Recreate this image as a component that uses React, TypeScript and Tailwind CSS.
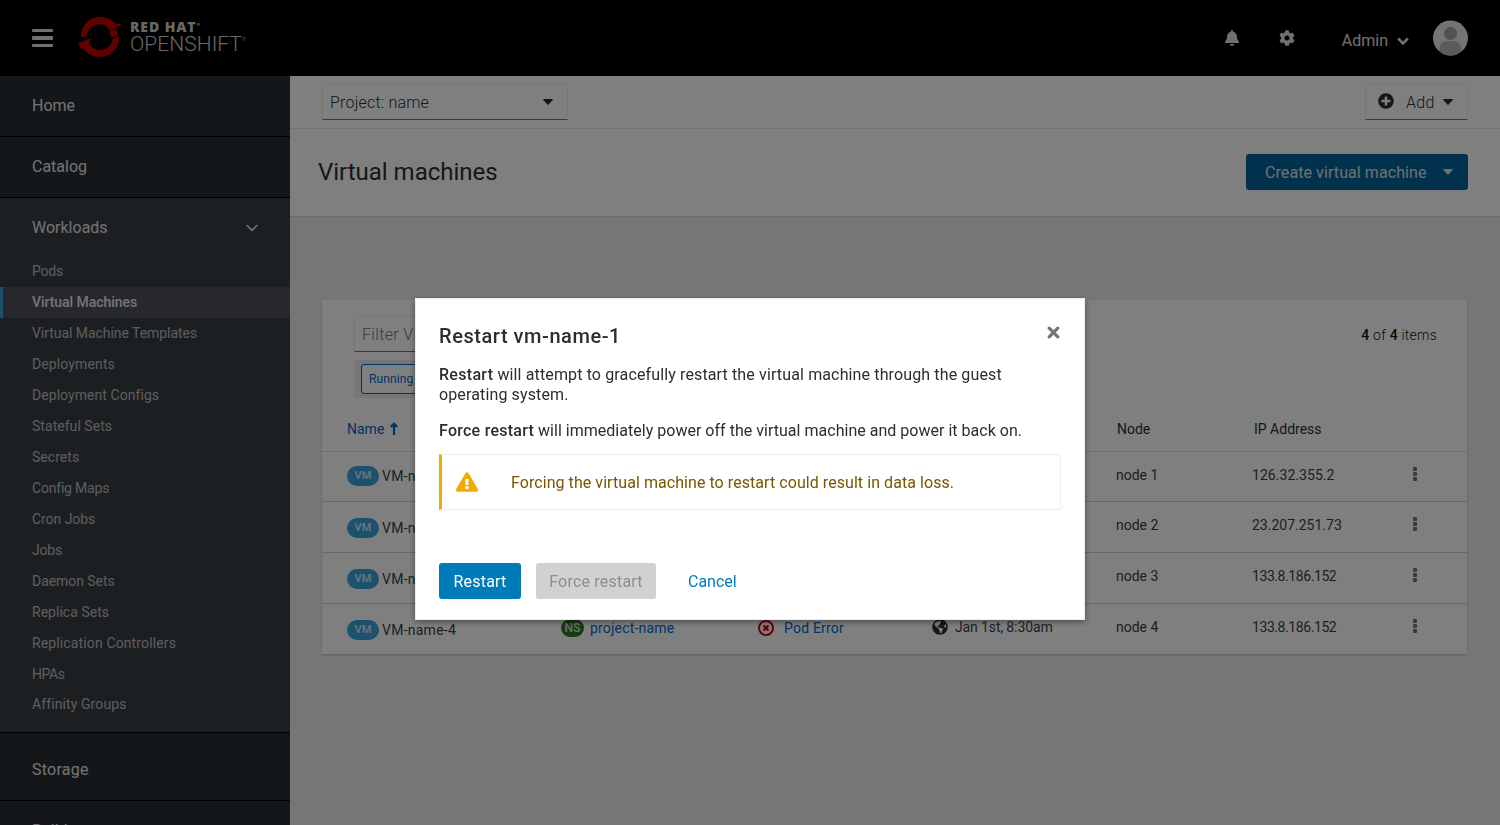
import { FaBell, FaCog, FaExclamationTriangle, FaGlobeAmericas, FaPlusCircle } from "react-icons/fa";

const workloads = [
  { label: "Pods", tracking: "tracking-[-0.2px]" },
  { label: "Virtual Machines", active: true, tracking: "tracking-[-0.05px]" },
  { label: "Virtual Machine Templates", tracking: "tracking-[-0.05px]" },
  { label: "Deployments", tracking: "tracking-[0.12px]" },
  { label: "Deployment Configs", tracking: "tracking-[0.06px]" },
  { label: "Stateful Sets", tracking: "tracking-[0.04px]" },
  { label: "Secrets", tracking: "tracking-[0.04px]" },
  { label: "Config Maps", tracking: "tracking-[-0.2px]" },
  { label: "Cron Jobs", tracking: "tracking-[-0.05px]" },
  { label: "Jobs", tracking: "tracking-[-0.2px]" },
  { label: "Daemon Sets", tracking: "tracking-[-0.06px]" },
  { label: "Replica Sets", tracking: "tracking-[0.03px]" },
  { label: "Replication Controllers", tracking: "tracking-[0.13px]" },
  { label: "HPAs", tracking: "tracking-[-0.4px]" },
  { label: "Affinity Groups", tracking: "tracking-[0.1px]" },
];

const machines = [
  { name: "VM-name-1", node: "node 1", ip: "126.32.355.2", row: "h-[50px]", namePad: "pb-[2px]", cellPad: "pb-[4px]", ipTracking: "tracking-[0.05px]", detail: false },
  { name: "VM-name-2", node: "node 2", ip: "23.207.251.73", row: "h-[51px]", namePad: "pt-[2px]", cellPad: "pb-[4px]", ipTracking: "", detail: false },
  { name: "VM-name-3", node: "node 3", ip: "133.8.186.152", row: "h-[51px]", namePad: "pt-[2px]", cellPad: "pb-[4px]", ipTracking: "tracking-[-0.42px]", detail: false },
  { name: "VM-name-4", node: "node 4", ip: "133.8.186.152", row: "h-[51px]", namePad: "pt-[2px]", cellPad: "pb-[4px]", ipTracking: "tracking-[-0.42px]", detail: true },
];

function Caret({ className }: { className: string }) {
  return (
    <svg viewBox="0 0 10 6" className={`h-[6px] w-[10px] shrink-0 ${className}`} fill="currentColor">
      <path d="M.5 0h9q.8.3.2 1L5.6 5.6q-.6.6-1.2 0L.3 1Q-.2.3.5 0z" />
    </svg>
  );
}

function Logo() {
  return (
    <div className="flex items-start">
      <svg viewBox="0 0 44 42" className="-mt-[2px] h-[42px] w-[44px]" fill="#c40000">
        <path d="M3 21.500C2.500 9.500 11.500 1 22.500 1C29 1 34.500 3.500 38 8.300L43 7.200L43.300 9.400L31.500 14.500C29.500 10.500 26.500 8.200 22.500 8.200C15.500 8.200 9.600 12 9.200 19.700Z" />
        <path d="M31.500 14.800L38.500 12.800L40 19.500L33 22Z" />
        <path d="M.2 27.300L7 24.500L9.300 30.500L2.800 33Z" />
        <path d="M6.500 24.600L13.500 22L11.300 27C13 31.500 17.500 34 22.300 34C29.500 34 34 28.500 34.800 22.500L41 20C41.500 32 33.500 41 22.300 41C14 41 8 37 4.800 31.500Z" />
      </svg>
      <div className="ml-2 flex flex-col pt-[2px] text-[#d1d1d1]">
        <div className="flex h-[14px] items-start font-['Open_Sans',sans-serif] text-[14px] leading-[14px] font-extrabold tracking-[0.9px]">
          <span>RED HAT</span>
          <span className="text-[4px] leading-[9px] tracking-normal">®</span>
        </div>
        <div className="flex h-[21px] items-start text-[21px] leading-[20px] font-light tracking-[0.05px]">
          <span>OPENSHIFT</span>
          <span className="text-[5px] leading-[10px]">®</span>
        </div>
      </div>
    </div>
  );
}

function Header() {
  return (
    <header className="flex h-[76px] shrink-0 items-center bg-black text-[#e0e0e0]">
      <div className="ml-8 flex w-[21px] flex-col gap-[4px]">
        <span className="h-[3px] rounded-[1px] bg-[#e0e0e0]" />
        <span className="h-[4px] rounded-[1px] bg-[#e0e0e0]" />
        <span className="h-[3px] rounded-[1px] bg-[#e0e0e0]" />
      </div>
      <div className="ml-[25px]">
        <Logo />
      </div>
      <div className="ml-auto flex items-center pr-8">
        <FaBell className="size-4" />
        <FaCog className="ml-[39px] size-4" />
        <span className="mt-[5px] ml-[47px] text-base">Admin</span>
        <svg viewBox="0 0 12 9" className="mt-[7px] ml-[9px] h-[9px] w-3" fill="none" stroke="currentColor" strokeWidth="2.600">
          <path d="M1.200 1.500L6 6.300L10.800 1.500" />
        </svg>
        <svg viewBox="0 0 35 36" className="ml-[24px] h-9 w-[35px]">
          <defs>
            <clipPath id="avatar"><circle cx="17.500" cy="18" r="17.500" /></clipPath>
          </defs>
          <g clipPath="url(#avatar)">
            <rect width="36" height="36" fill="#e8e8e8" />
            <rect x="6.500" y="21" width="22" height="20" rx="8" fill="#b6b6b6" />
            <circle cx="17.500" cy="13.500" r="6.500" fill="#a3a3a3" />
          </g>
        </svg>
      </div>
    </header>
  );
}

function Sidebar() {
  return (
    <nav className="flex w-[290px] shrink-0 flex-col bg-[#292e34] text-[#e6e6e6]">
      <div className="flex h-[61px] shrink-0 items-center border-b border-black px-8">Home</div>
      <div className="flex h-[61px] shrink-0 items-center border-b border-black px-8">Catalog</div>
      <div className="flex h-[535px] shrink-0 flex-col border-b border-black bg-[#393f44]">
        <div className="flex h-[58px] shrink-0 items-center justify-between px-8 pt-[2px]">
          Workloads
          <svg viewBox="0 0 12 8" className="h-2 w-3" fill="none" stroke="currentColor" strokeWidth="1.700">
            <path d="M.6 1L6 6.400L11.400 1" />
          </svg>
        </div>
        <ul className="text-sm">
          {workloads.map((item) => (
            <li
              key={item.label}
              className={`flex h-[31px] items-center border-l-3 pb-[2px] pl-[29px] last:h-[30px] ${item.tracking} ${
                item.active ? "border-[#39a5dc] bg-[#4f5157] font-medium text-[#e9e9e9]" : "border-transparent text-[#bdbdbd]"
              }`}
            >
              {item.label}
            </li>
          ))}
        </ul>
      </div>
      <div className="flex h-[68px] shrink-0 items-center border-b border-black px-8 pt-[6px] tracking-[0.25px]">Storage</div>
      <div className="flex h-[61px] shrink-0 items-center px-8 pb-[2px]">Builds</div>
    </nav>
  );
}

function Kebab() {
  return (
    <svg viewBox="0 0 4 14" className="-mt-[2px] h-[14px] w-[4px]" fill="#72767b">
      <rect width="4" height="4" rx="1" />
      <rect y="5" width="4" height="4" rx="1" />
      <rect y="10" width="4" height="4" rx="1" />
    </svg>
  );
}

const columns = "grid grid-cols-[214px_197px_174px_184px_136px_1fr] pl-[25px]";

function MachineTable() {
  return (
    <section className="mt-[83px] ml-8 flex h-[354px] w-[1145px] shrink-0 flex-col bg-white shadow-[0_1px_2px_rgba(0,0,0,0.2)]">
      <div className="flex h-[107px] shrink-0 justify-between pt-4 pr-[30px] pl-8">
        <div className="flex w-[400px] flex-col gap-2">
          <div className="flex h-9 items-center border border-[#ededed] border-b-[#72767b] pt-[2px] pl-[7px] text-base font-light tracking-[0.35px] text-[#72767b]">
            Filter VMs
          </div>
          <div className="flex h-[38px] items-center rounded-[3px] bg-[#ededed] pl-[7px]">
            <span className="flex h-[30px] items-center rounded-[3px] border border-[#0066cc] bg-white px-[7px] text-xs tracking-[0.1px] text-[#0066cc]">
              Running
            </span>
          </div>
        </div>
        <p className="mt-[9px] text-sm leading-5 font-light tracking-[0.22px] text-[#151515]">
          <b className="font-medium">4</b> of <b className="font-medium">4</b> items
        </p>
      </div>
      <div className={`${columns} h-[45px] shrink-0 items-center border-b border-[#dedede] pb-[1px] text-sm text-[#292e34]`}>
        <span className="col-span-3 flex items-center gap-[6px] text-[#0066cc]">
          Name
          <svg viewBox="0 0 8 13" className="h-[13px] w-2" fill="none" stroke="currentColor" strokeWidth="2.200">
            <path d="M4 13V2M.8 4.900L4 1.700L7.200 4.900" />
          </svg>
        </span>
        <span />
        <span className="pl-[1px]">Node</span>
        <span className="pl-[2px]">IP Address</span>
      </div>
      {machines.map((vm) => (
        <div
          key={vm.name}
          className={`${columns} ${vm.row} shrink-0 items-center border-b border-[#d0d0d0] text-sm text-[#393f44] last:border-transparent`}
        >
          <span className={`flex items-center gap-[3px] tracking-[0.25px] ${vm.namePad}`}>
            <span className="flex h-5 w-8 items-center justify-center rounded-full bg-[#39a5dc] text-[11px] font-medium text-white/80">VM</span>
            {vm.name}
          </span>
          {vm.detail ? (
            <>
              <span className="flex items-center gap-[6px] pb-[2px] tracking-[0.2px] text-[#0066cc]">
                <span className="flex h-[18px] w-[23px] items-center justify-center rounded-full bg-[#2d7623] text-xs font-medium text-white/80">NS</span>
                project-name
              </span>
              <span className="flex items-center gap-[10px] pb-[2px] tracking-[0.2px] text-[#0066cc]">
                <svg viewBox="0 0 16 16" className="size-4" fill="none" stroke="#cc0000">
                  <circle cx="8" cy="8" r="7" strokeWidth="2" />
                  <path d="M5.500 5.500L10.500 10.500M10.500 5.500L5.500 10.500" strokeWidth="2.400" />
                </svg>
                Pod Error
              </span>
              <span className="flex items-center gap-[7px] pb-[4px] tracking-[-0.12px]">
                <FaGlobeAmericas className="size-4 text-[#292e34]" />
                Jan 1st, 8:30am
              </span>
            </>
          ) : (
            <span className="col-span-3" />
          )}
          <span className={vm.cellPad}>{vm.node}</span>
          <span className={`flex items-center justify-between pr-[50px] ${vm.ipTracking} ${vm.cellPad}`}>
            {vm.ip}
            <Kebab />
          </span>
        </div>
      ))}
    </section>
  );
}

function Main() {
  return (
    <main className="flex grow flex-col bg-[#ededed] text-[#292e34]">
      <div className="flex h-[53px] shrink-0 items-start justify-between border-b border-[#e4e4e4] bg-white px-8 pt-2">
        <div className="flex h-9 w-[246px] items-center justify-between border border-[#ededed] border-b-[#72767b] pr-[14px] pl-[7px] text-base font-light tracking-[0.2px]">
          <span className="pt-[2px]">Project: name</span>
          <Caret className="text-[#292e34]" />
        </div>
        <div className="flex h-9 w-[103px] items-center border border-[#ededed] border-b-[#72767b] pl-[12px] text-base font-light">
          <FaPlusCircle className="-mt-[2px] size-4" />
          <span className="ml-[12px] pt-[2px] tracking-[0.3px]">Add</span>
          <Caret className="ml-[8px]" />
        </div>
      </div>
      <div className="flex h-[88px] shrink-0 items-center justify-between border-b border-[#d8d8d8] bg-white pr-8 pb-[2px] pl-7">
        <h1 className="pt-[1px] text-2xl tracking-[-0.02px]">Virtual machines</h1>
        <button className="flex h-9 w-[222px] items-center rounded-[3px] bg-[#00659c] pl-[19px] text-base tracking-[0.08px] text-[#e0e0e0]">
          <span className="pt-[2px]">Create virtual machine</span>
          <Caret className="mr-[15px] ml-auto" />
        </button>
      </div>
      <MachineTable />
    </main>
  );
}

function RestartDialog() {
  return (
    <div className="fixed inset-0 flex items-start justify-center bg-black/50 pt-[298px]">
      <div role="dialog" className="flex h-[322px] w-[670px] flex-col border border-[#ededed] bg-white px-[23px] text-base leading-5 text-[#292e34] shadow-[0_2px_6px_rgba(0,0,0,0.4)]">
        <div className="flex h-[66px] justify-between pt-[25px]">
          <h2 className="text-xl leading-6 font-medium tracking-[0.55px]">Restart vm-name-1</h2>
          <svg viewBox="0 0 13 13" className="mt-[2px] mr-[1px] size-[13px]" fill="none" stroke="#72767b" strokeWidth="3.200" strokeLinecap="round">
            <path d="M2.200 2.200L10.800 10.800M10.800 2.200L2.200 10.800" />
          </svg>
        </div>
        <p className="tracking-[0.13px]">
          <b className="font-medium tracking-[0.3px]">Restart</b> will attempt to gracefully restart the virtual machine through the guest
          <br />
          operating system.
        </p>
        <p className="mt-4 tracking-[0.02px]">
          <b className="font-medium tracking-[0.25px]">Force restart</b> will immediately power off the virtual machine and power it back on.
        </p>
        <div className="mt-[13px] flex h-14 items-center border border-l-3 border-[#ededed] border-l-[#f0ab00] pl-[14px] text-[#795600]">
          <FaExclamationTriangle className="size-[22px] text-[#f0ab00]" />
          <span className="ml-[33px] pt-[2px] tracking-[0.06px]">Forcing the virtual machine to restart could result in data loss.</span>
        </div>
        <div className="mt-[53px] flex h-9 text-base">
          <button className="w-[82px] rounded-[3px] bg-[#007bba] pt-[2px] tracking-[0.2px] text-white">Restart</button>
          <button className="ml-[15px] w-[120px] rounded-[3px] bg-[#d1d1d1] pt-[2px] tracking-[0.2px] text-[#8b8d8f]">Force restart</button>
          <button className="ml-8 pt-[2px] text-[#007bba]">Cancel</button>
        </div>
      </div>
    </div>
  );
}

export default function App() {
  return (
    <div className="flex h-screen w-screen flex-col overflow-hidden font-['Roboto',sans-serif] text-base">
      <Header />
      <div className="flex min-h-0 grow overflow-hidden">
        <Sidebar />
        <Main />
      </div>
      <RestartDialog />
    </div>
  );
}
